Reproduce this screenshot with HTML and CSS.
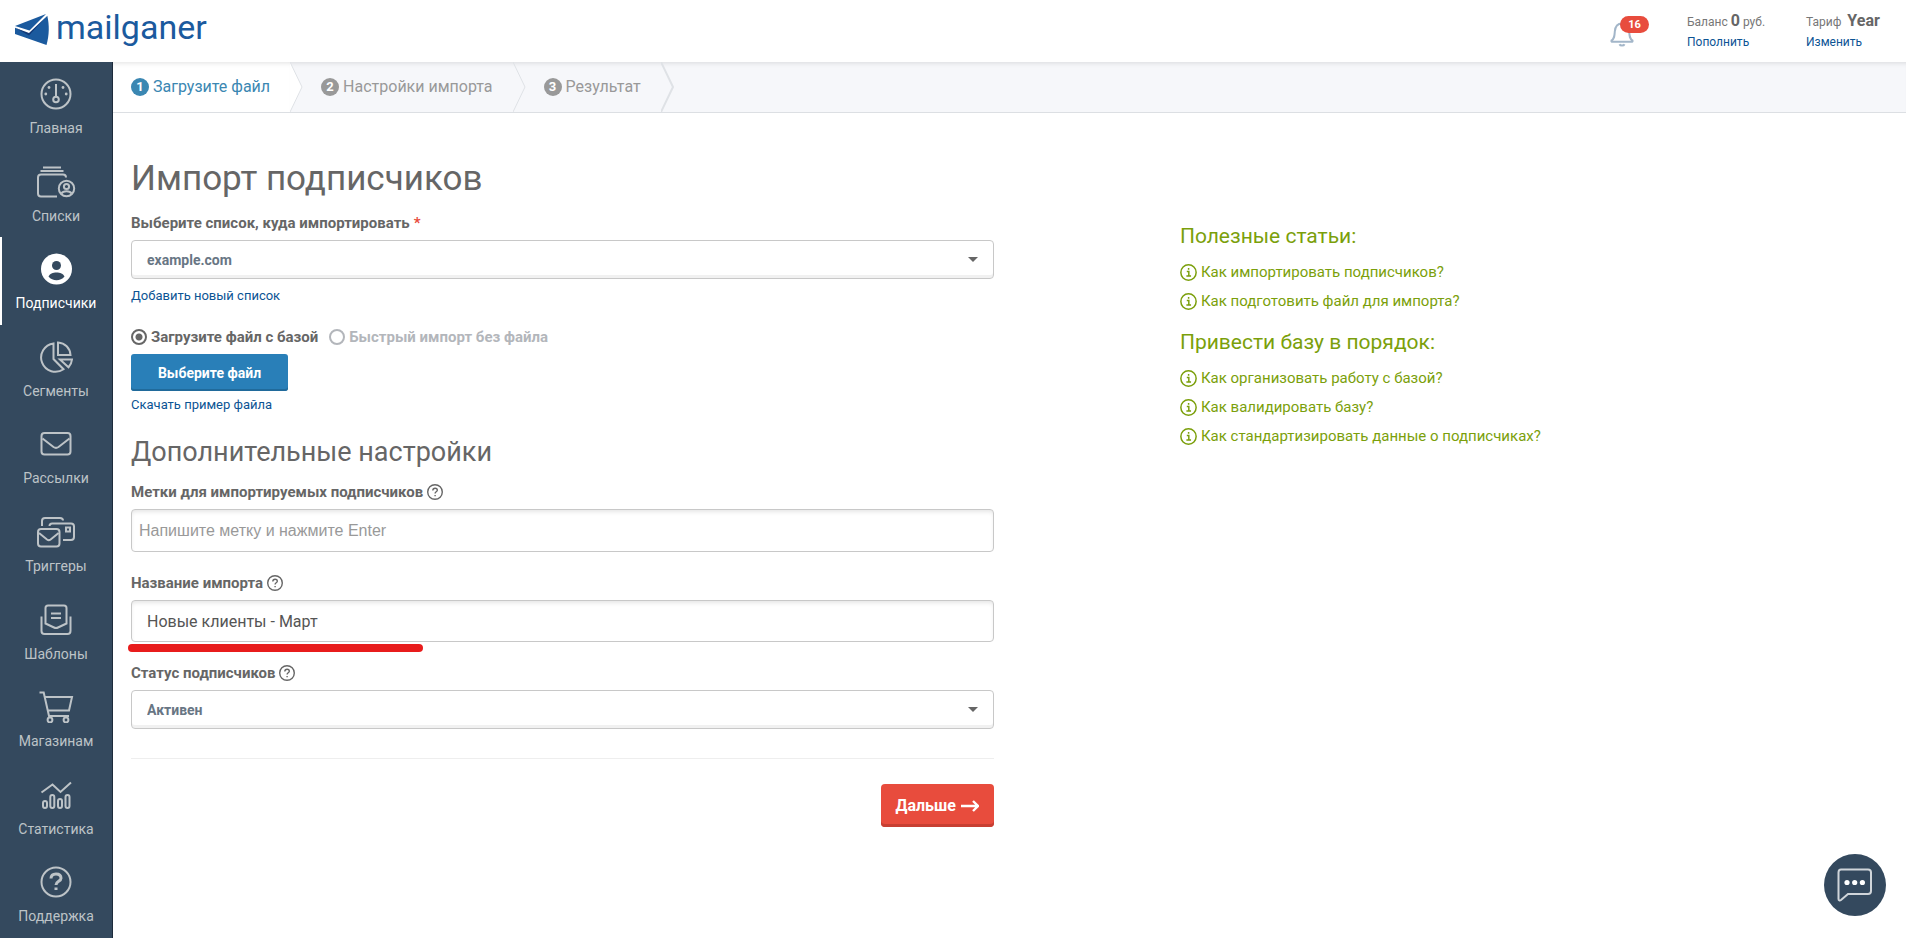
FILE: index.html
```html
<!DOCTYPE html>
<html lang="ru">
<head>
<meta charset="utf-8">
<title>Импорт подписчиков</title>
<link rel="stylesheet" href="styles.css">
</head>
<body>
<svg class="defs" width="0" height="0" aria-hidden="true">
  <symbol id="i-help" viewBox="0 0 16 16"><circle cx="8" cy="8" r="7.3"/><path d="M5.8 6.4c0-1.4 1-2.2 2.3-2.2s2.2.8 2.2 2c0 1.5-2.2 1.6-2.2 3.2M8.1 11v1.2"/></symbol>
  <symbol id="i-info" viewBox="0 0 16 16"><circle cx="8" cy="8" r="7.2"/><path d="M6.4 7h1.9v4.4M6 11.4h4.4M8.1 3.8v1.6"/></symbol>
</svg>

<header class="header">
  <a class="logo" href="#">
    <svg class="logo-mark" width="35" height="32" viewBox="0 0 35 32" aria-hidden="true">
      <path fill="#1b5a9e" d="M0 12L31 0 14.500 16.500z"/>
      <path fill="#1b5a9e" d="M0 13.800L14 20 32.300 1.800C34.400 11 34.400 21 31.500 31L0 20z"/>
      <path fill="#123a78" d="M0 13.800L14 19 31 3 14 21.500z"/>
    </svg>
    <span class="logo-text">mailganer</span>
  </a>
  <div class="account">
    <button class="bell" type="button" aria-label="Уведомления">
      <svg width="24" height="26" viewBox="0 0 24 26" aria-hidden="true"><path d="M1.500 19.500c3-2 3-4.500 3.300-9C5.200 5.500 8 2.500 12 2.500s6.800 3 7.200 8c.3 4.500.3 7 3.300 9 .3 1-.2 1.300-1 1.300h-19c-.8 0-1.300-.3-1-1.300zM9.500 23.200c.8 1.700 4.200 1.700 5 0"/></svg>
      <span class="badge">16</span>
    </button>
    <div class="account-block balance">
      <span>Баланс <strong>0</strong> руб.</span>
      <a href="#">Пополнить</a>
    </div>
    <div class="account-block">
      <span>Тариф&nbsp; <strong>Year</strong></span>
      <a href="#">Изменить</a>
    </div>
  </div>
</header>

<div class="shell">
  <nav class="sidebar">
    <a class="nav-item" href="#"><svg viewBox="0 0 40 32"><circle cx="20" cy="16" r="14.500"/><circle cx="20" cy="21.500" r="2.800"/><path d="M20 6v12.500"/><g class="dots"><circle cx="9.800" cy="16" r="1.400"/><circle cx="30.200" cy="16" r="1.400"/><circle cx="13" cy="9.500" r="1.400"/><circle cx="27" cy="9.500" r="1.400"/></g></svg>Главная</a>
    <a class="nav-item" href="#"><svg viewBox="0 0 40 32"><path d="M21 30.500H5c-2 0-3-1-3-3v-16c0-2 1-3 3-3h22c2 0 3 1 3 3M4.500 5h23M7 1.500h18"/><circle cx="30.500" cy="22.500" r="7.700"/><circle cx="30.500" cy="20.500" r="2.600"/><path d="M25.500 27.500c1.500-3 8.500-3 10 0"/></svg>Списки</a>
    <a class="nav-item active" href="#"><svg viewBox="0 0 40 32"><circle class="solid" cx="20.500" cy="16" r="15.500"/><circle class="hole" cx="20.500" cy="12.500" r="4.500"/><path class="hole" d="M12.500 23.500c2-5.500 14-5.500 16 0-4 5-12 5-16 0z"/></svg>Подписчики</a>
    <a class="nav-item" href="#"><svg viewBox="0 0 40 32"><path d="M17.500 2.500A14.200 14.200 0 1 0 27.500 28.200L17.500 18zM22 1.500v12.500h12.500C34 7 29 2 22 1.500zM24 18.500h12c-.3 3-1.500 5.500-3.500 7.800z"/></svg>Сегменты</a>
    <a class="nav-item" href="#"><svg viewBox="0 0 40 32"><rect x="5.500" y="5" width="29" height="21.500" rx="3"/><path d="M6.500 10.500L17.500 19c1.700 1.200 3.300 1.200 5 0l11-8.500"/></svg>Рассылки</a>
    <a class="nav-item" href="#"><svg viewBox="0 0 40 32"><rect x="2" y="13" width="21.500" height="17.500" rx="3"/><path d="M3 17l8 6.500c1.200.9 2.400.9 3.600 0l8-6.500M6 10V5c0-2 1-3 3-3h15c2 0 3 .8 3 2.500M13.500 10c0-1.500 1-2.500 2.700-2.500H35c2 0 3 1 3 3V21c0 2-1 3-3 3h-8"/><rect x="30" y="11.500" width="4" height="4"/></svg>Триггеры</a>
    <a class="nav-item" href="#"><svg viewBox="0 0 40 32"><path d="M9.500 19.500V4c0-1.700.8-2.500 2.500-2.500h16c1.700 0 2.500.8 2.500 2.500v15.500l-8.500 4c-1.500.8-2.500.8-4 0zM15 9.500h10M15 14h10M5.500 12.500V27c0 2 1 3 3 3h23c2 0 3-1 3-3V12.500"/></svg>Шаблоны</a>
    <a class="nav-item" href="#"><svg viewBox="0 0 40 32"><path d="M3.500 1.500h4.200l5.300 23.500h20M9 6h27l-3 13.500H12"/><circle cx="14" cy="29" r="2.400"/><circle cx="30" cy="29" r="2.400"/></svg>Магазинам</a>
    <a class="nav-item" href="#"><svg viewBox="0 0 40 32"><path d="M5.500 13.500l11-8 8 7.500 10.500-9.500"/><rect x="7" y="22" width="4" height="7" rx="2"/><rect x="14.300" y="16" width="4" height="13" rx="2"/><rect x="22" y="20" width="4" height="9" rx="2"/><rect x="29.500" y="16" width="4" height="13" rx="2"/></svg>Статистика</a>
    <a class="nav-item" href="#"><svg viewBox="0 0 40 32"><circle cx="20" cy="16" r="14.500"/><path class="bold" d="M15 12.500c0-3 2-4.500 5-4.500s5 1.500 5 4.200c0 3.300-5 3-5 6.800M20 21.500v2.500"/></svg>Поддержка</a>
  </nav>

  <main class="main">
    <ol class="steps">
      <li class="step current"><span class="num">1</span>Загрузите файл<svg class="chevron" viewBox="0 0 13 50" preserveAspectRatio="none" aria-hidden="true"><path d="M0 0l12 25L0 50"/></svg></li>
      <li class="step"><span class="num">2</span>Настройки импорта<svg class="chevron" viewBox="0 0 13 50" preserveAspectRatio="none" aria-hidden="true"><path d="M0 0l12 25L0 50"/></svg></li>
      <li class="step last"><span class="num">3</span>Результат<svg class="chevron" viewBox="0 0 13 50" preserveAspectRatio="none" aria-hidden="true"><path d="M0 0l12 25L0 50"/></svg></li>
    </ol>

    <div class="content">
      <form class="import-form">
        <h1>Импорт подписчиков</h1>

        <label class="label" for="list">Выберите список, куда импортировать <span class="required">*</span></label>
        <div class="select-box">
          <select id="list" class="control select"><option>example.com</option></select>
          <svg class="caret" viewBox="0 0 10 5" aria-hidden="true"><path d="M0 0h10L5 5z"/></svg>
        </div>
        <a class="small-link add-list" href="#">Добавить новый список</a>

        <div class="radios">
          <label class="radio"><input type="radio" name="source" checked>Загрузите файл с базой</label>
          <label class="radio"><input type="radio" name="source">Быстрый импорт без файла</label>
        </div>
        <button class="btn btn-blue" type="button">Выберите файл</button>
        <a class="small-link" href="#">Скачать пример файла</a>

        <h2>Дополнительные настройки</h2>

        <label class="label" for="tags">Метки для импортируемых подписчиков <svg class="help"><use href="#i-help"/></svg></label>
        <input id="tags" class="control tags" type="text" placeholder="Напишите метку и нажмите Enter">

        <label class="label" for="name">Название импорта <svg class="help"><use href="#i-help"/></svg></label>
        <div class="marked">
          <input id="name" class="control name" type="text" value="Новые клиенты - Март">
          <span class="underline"></span>
        </div>

        <label class="label" for="status">Статус подписчиков <svg class="help"><use href="#i-help"/></svg></label>
        <div class="select-box">
          <select id="status" class="control select"><option>Активен</option></select>
          <svg class="caret" viewBox="0 0 10 5" aria-hidden="true"><path d="M0 0h10L5 5z"/></svg>
        </div>

        <div class="actions">
          <button class="btn btn-red" type="submit">Дальше
            <svg width="18" height="12" viewBox="0 0 18 12" aria-hidden="true"><path d="M0 6h17M12 1l5 5-5 5"/></svg>
          </button>
        </div>
      </form>

      <aside class="tips">
        <h3>Полезные статьи:</h3>
        <ul>
          <li><a href="#"><svg><use href="#i-info"/></svg>Как импортировать подписчиков?</a></li>
          <li><a href="#"><svg><use href="#i-info"/></svg>Как подготовить файл для импорта?</a></li>
        </ul>
        <h3>Привести базу в порядок:</h3>
        <ul>
          <li><a href="#"><svg><use href="#i-info"/></svg>Как организовать работу с базой?</a></li>
          <li><a href="#"><svg><use href="#i-info"/></svg>Как валидировать базу?</a></li>
          <li><a href="#"><svg><use href="#i-info"/></svg>Как стандартизировать данные о подписчиках?</a></li>
        </ul>
      </aside>
    </div>
  </main>
</div>

<button class="chat" type="button" aria-label="Чат">
  <svg width="36" height="34" viewBox="0 0 36 34" aria-hidden="true"><path d="M4 1.500h27c2 0 3 1 3 3V23c0 2-1 3-3 3H11l-7 6c-1.300 1-2.500.5-2.500-1V4.500c0-2 .8-3 2.500-3z"/><circle cx="10" cy="14.500" r="2.600"/><circle cx="17.700" cy="14.500" r="2.600"/><circle cx="25.400" cy="14.500" r="2.600"/></svg>
</button>
</body>
</html>
```
FILE: styles.css
```css
* { box-sizing: border-box; }

body {
  margin: 0;
  min-height: 100vh;
  display: flex;
  flex-direction: column;
  font-family: Roboto, "Noto Sans", sans-serif;
  font-size: 15px;
  line-height: 20px;
  color: #666;
  background: #fff;
}

a { color: #0c5494; text-decoration: none; }
button, input, select { font: inherit; }
h1, h2, h3, ul, ol { margin: 0; padding: 0; font-weight: 400; }
ul, ol { list-style: none; }
svg { fill: none; }
.defs { position: absolute; }

/* Header */
.header {
  height: 62px;
  display: flex;
  align-items: flex-start;
  justify-content: space-between;
  padding: 0 25px 0 15px;
}
.logo { display: flex; align-items: flex-start; gap: 6px; padding-top: 7px; }
.logo-mark { margin-top: 7px; }
.logo-text { font-size: 34px; line-height: 40px; color: #1b5a9e; }
.account { display: flex; padding-top: 10px; font-size: 12px; }
.account-block { display: flex; flex-direction: column; min-width: 75px; }
.account-block span { line-height: 22px; color: #777; }
.account-block a { line-height: 18px; }
.account strong { font-size: 16px; color: #666; }
.balance { width: 119px; }
.bell {
  position: relative;
  width: 77px;
  padding: 11px 0 0;
  border: 0;
  background: none;
  text-align: left;
}
.bell path { stroke: #a3b6c9; stroke-width: 2; }
.badge {
  position: absolute;
  left: 10px;
  top: 6px;
  width: 29px;
  height: 17px;
  border-radius: 9px;
  background: #e84c3d;
  color: #fff;
  font-size: 11px;
  font-weight: 700;
  line-height: 17px;
  text-align: center;
}

/* Shell */
.shell { flex: 1; display: flex; }
.sidebar {
  width: 113px;
  flex: none;
  display: flex;
  flex-direction: column;
  background: #34495e;
  border-right: 1px solid #1d2b3b;
}
.nav-item {
  flex: 1;
  display: flex;
  flex-direction: column;
  align-items: center;
  gap: 8px;
  padding: 16px 2px 0 0;
  border-left: 2px solid transparent;
  color: #bdc3c7;
  font-size: 14px;
}
.nav-item svg { width: 40px; height: 32px; stroke: #bdc3c7; stroke-width: 2; }
.nav-item .dots { fill: #bdc3c7; stroke: none; }
.nav-item .bold { stroke-width: 3; }
.nav-item.active { color: #fff; border-left-color: #fff; }
.nav-item .solid { fill: #fff; stroke: none; }
.nav-item .hole { fill: #34495e; stroke: none; }

.main { flex: 1; min-width: 0; }

/* Steps */
.steps {
  display: flex;
  height: 51px;
  background: #f6f7fa;
  border-bottom: 1px solid #dcdfe3;
  box-shadow: inset 0 5px 5px -4px rgba(0, 0, 0, 0.12);
  font-size: 16px;
  color: #999;
}
.step {
  position: relative;
  display: flex;
  align-items: center;
  gap: 4px;
  padding: 0 20px 0 31px;
}
.step:first-child { padding-left: 18px; }
.step.current { color: #3b87b2; background: #fff; box-shadow: inset 0 5px 5px -4px rgba(0, 0, 0, 0.12); }
.num {
  width: 18px;
  height: 18px;
  border-radius: 50%;
  background: #999;
  color: #fff;
  font-size: 13px;
  font-weight: 700;
  line-height: 18px;
  text-align: center;
}
.current .num { background: #3b87b2; }
.chevron { position: absolute; left: 100%; top: 0; width: 13px; height: 50px; stroke: #dfe2e6; }
.current .chevron { fill: #fff; }
.last .chevron { stroke-width: 2; }

/* Content */
.content { display: flex; justify-content: space-between; padding: 43px 18px 40px; }
.import-form { width: 49.1%; display: flex; flex-direction: column; align-items: flex-start; }
h1 { font-size: 35px; line-height: 46px; margin-bottom: 11px; }
h2 { font-size: 27px; line-height: 36px; margin: 20px 0 12px; }
.label { display: flex; align-items: center; gap: 4px; font-weight: 700; margin-bottom: 7px; }
.required { color: #e84c3d; }
.help { width: 16px; height: 16px; stroke: #666; stroke-width: 1.4; }
.control {
  display: block;
  width: 100%;
  border: 1px solid #c8c8c8;
  border-radius: 4px;
  outline: 0;
  background: #fff;
  color: #555;
}
.select-box { position: relative; width: 100%; }
.select {
  height: 39px;
  padding: 0 15px;
  appearance: none;
  color: #687684;
  font-size: 14px;
  font-weight: 700;
  box-shadow: inset 0 -3px 0 #f1f1f1;
}
.caret { position: absolute; right: 16px; top: 17px; width: 10px; height: 5px; fill: #666; }
.small-link { font-size: 13px; line-height: 18px; }
.add-list { margin: 8px 0 22px; }
.radios { display: flex; gap: 11px; margin-bottom: 7px; font-weight: 700; }
.radio { display: flex; align-items: center; gap: 4px; }
.radio + .radio { color: #b3b6bb; }
.radio input {
  appearance: none;
  width: 16px;
  height: 16px;
  margin: 0;
  border: 2px solid #b3b6bb;
  border-radius: 50%;
}
.radio input:checked { border-color: #666; background: radial-gradient(#666 3px, transparent 4px); }
.btn { border: 0; color: #fff; font-weight: 700; }
.btn-blue {
  width: 157px;
  height: 37px;
  margin-bottom: 5px;
  border-radius: 3px;
  background: #297fb8;
  box-shadow: inset 0 -2px 0 #206a9b;
  font-size: 14px;
}
.tags, .name { box-shadow: inset 0 3px 4px -1px rgba(0, 0, 0, 0.1); margin-bottom: 21px; }
.tags { height: 43px; padding: 0 7px; font-family: "Liberation Sans", Arial, sans-serif; font-size: 16px; }
.tags::placeholder { color: #999; }
.name { height: 42px; padding: 0 15px; font-size: 16px; }
.marked { position: relative; width: 100%; }
.underline {
  position: absolute;
  left: -3px;
  top: 44px;
  width: 295px;
  height: 8px;
  border-radius: 4px;
  background: #e81c1c;
}
.actions {
  align-self: stretch;
  display: flex;
  justify-content: flex-end;
  margin-top: 29px;
  padding-top: 25px;
  border-top: 1px solid #eee;
}
.btn-red {
  display: flex;
  align-items: center;
  justify-content: center;
  gap: 5px;
  width: 113px;
  height: 43px;
  padding: 0;
  border-radius: 4px;
  background: #e84c3d;
  box-shadow: inset 0 -3px 0 #c73f32;
  font-size: 16px;
}
.btn-red svg { stroke: #fff; stroke-width: 2.4; }

/* Tips */
.tips { width: 40.3%; padding-top: 66px; }
.tips h3 { font-size: 21px; line-height: 28px; margin-bottom: 8px; color: #7b9f0b; }
.tips li { height: 29px; }
.tips ul { margin-bottom: 12px; }
.tips a { display: flex; align-items: center; gap: 4px; line-height: 28px; color: #7b9f0b; }
.tips svg { width: 17px; height: 17px; stroke: #7b9f0b; stroke-width: 1.4; }

/* Chat */
.chat {
  position: fixed;
  right: 20px;
  bottom: 22px;
  width: 62px;
  height: 62px;
  padding: 0;
  display: flex;
  align-items: center;
  justify-content: center;
  border: 0;
  border-radius: 50%;
  background: #34495e;
}
.chat path { stroke: #d0d5da; stroke-width: 2; }
.chat circle { fill: #fff; }
```
